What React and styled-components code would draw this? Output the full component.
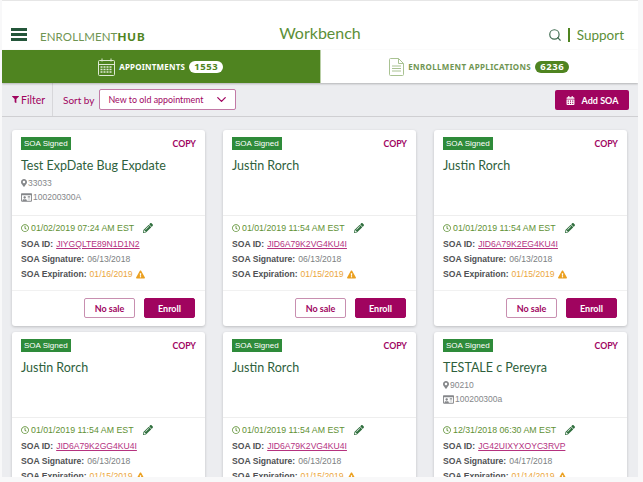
import React from 'react';
import styled, { createGlobalStyle } from 'styled-components';
import { FaFilter, FaMapMarkerAlt, FaRegIdCard, FaPencilAlt, FaExclamationTriangle, FaCalendarAlt, FaRegClock } from 'react-icons/fa';
import { FiSearch, FiChevronDown } from 'react-icons/fi';

const green = '#4f8420';
const softGreen = '#5c8f38';
const plum = '#a0045f';

const GlobalStyle = createGlobalStyle`
  html, body {
    margin: 0;
    background: #f8f8f9;
    overflow: hidden;
  }
`;

const Screen = styled.div`
  width: 636px;
  height: 477px;
  margin-left: 2px;
  overflow: hidden;
  background: #ecedf0;
  font-family: "Liberation Sans", Arial, sans-serif;
`;

const Header = styled.header`
  height: 50px;
  box-sizing: border-box;
  background: #fff;
  border-top: 1px solid #e6e6e6;
  display: grid;
  grid-template-columns: 1fr auto 1fr;
  align-items: end;
  padding: 0 9px 7px 9px;
`;

const Brand = styled.div`
  display: flex;
  align-items: flex-end;
  gap: 13px;
`;

const Burger = styled.div`
  width: 16px;
  height: 13px;
  margin-bottom: 2px;
  box-sizing: border-box;
  border-top: 3px solid #24563a;
  border-bottom: 3px solid #24563a;
  position: relative;
  &::after {
    content: "";
    position: absolute;
    left: 0;
    right: 0;
    top: 2px;
    height: 3px;
    background: #24563a;
  }
`;

const Logo = styled.div`
  font-family: "Lato", sans-serif;
  font-size: 11.5px;
  letter-spacing: 0.1px;
  color: #6f9552;
  b {
    font-weight: 900;
    color: ${green};
    letter-spacing: 1px;
  }
`;

const PageTitle = styled.h1`
  margin: 0 0 1px;
  font-family: "Lato", sans-serif;
  font-weight: 400;
  font-size: 16px;
  color: ${softGreen};
`;

const HeaderRight = styled.div`
  justify-self: end;
  display: flex;
  align-items: center;
  gap: 6px;
  margin-right: 5px;
  font-family: "Lato", sans-serif;
  font-size: 13.5px;
  color: ${softGreen};
  svg {
    color: #3f6b50;
  }
`;

const Bar = styled.span`
  width: 1.5px;
  height: 14px;
  margin-right: 1px;
  background: ${green};
`;

const Tabs = styled.nav`
  height: 33px;
  display: flex;
  box-shadow: 0 1px 2px rgba(0, 0, 0, 0.25);
  position: relative;
`;

const Tab = styled.div`
  flex: 1;
  display: flex;
  align-items: center;
  justify-content: center;
  gap: 4px;
  font-family: "Noto Sans", sans-serif;
  font-weight: 700;
  font-size: 8px;
  letter-spacing: ${(p) => (p.$active ? '0.2px' : '0.35px')};
  background: ${(p) => (p.$active ? green : '#fff')};
  color: ${(p) => (p.$active ? '#fff' : '#6f9552')};
  border-left: ${(p) => (p.$active ? 'none' : '1px solid #b9cfa6')};
`;

const Count = styled.span`
  border-radius: 7px;
  padding: 0 5px;
  height: 12px;
  line-height: 12px;
  font-size: 9.5px;
  letter-spacing: 0.6px;
  background: ${(p) => (p.$active ? '#fff' : green)};
  color: ${(p) => (p.$active ? green : '#fff')};
`;

const Toolbar = styled.div`
  height: 34px;
  display: flex;
  align-items: stretch;
  border-bottom: 1px solid #cfcfd2;
  box-sizing: border-box;
  padding-right: 9px;
  font-family: "Lato", sans-serif;
  color: ${plum};
`;

const FilterCell = styled.div`
  width: 51px;
  box-sizing: border-box;
  padding-left: 10px;
  display: flex;
  align-items: center;
  gap: 2px;
  font-size: 10.5px;
  border-right: 1px solid #d7d7da;
`;

const SortBy = styled.div`
  margin-left: 10px;
  display: flex;
  align-items: center;
  gap: 5px;
  font-size: 10px;
`;

const SortSelect = styled.div`
  width: 137px;
  height: 21px;
  box-sizing: border-box;
  display: flex;
  align-items: center;
  justify-content: space-between;
  padding: 0 6px 0 8px;
  background: #fff;
  border: 1px solid #c27aa6;
  border-radius: 2px;
  font-size: 8.9px;
`;

const AddButton = styled.button`
  margin: 7px 0 6px auto;
  width: 74px;
  border: none;
  border-radius: 2px;
  background: ${plum};
  color: #fff;
  font-family: "Lato", sans-serif;
  font-weight: 700;
  font-size: 9px;
  display: flex;
  align-items: center;
  justify-content: center;
  gap: 7px;
  padding: 0;
`;

const CardGrid = styled.main`
  display: grid;
  grid-template-columns: repeat(3, 193px);
  column-gap: 18px;
  row-gap: 6px;
  padding: 13px 0 0 10px;
`;

const Card = styled.article`
  height: 196px;
  display: flex;
  flex-direction: column;
  background: #fff;
  border-radius: 3px;
  box-shadow: 0 1px 3px rgba(0, 0, 0, 0.2);
`;

const CardTop = styled.div`
  height: 86px;
  box-sizing: border-box;
  padding: 7px 9px 0 9px;
  border-bottom: 1px solid #eeeeee;
`;

const TopRow = styled.div`
  display: flex;
  justify-content: space-between;
  align-items: flex-start;
`;

const Badge = styled.span`
  background: #2e8b3a;
  color: #fff;
  font-size: 8px;
  line-height: 13px;
  padding: 0 3px;
`;

const Copy = styled.span`
  font-family: "Lato", sans-serif;
  font-size: 8.7px;
  font-weight: 700;
  margin-top: 1px;
  color: ${plum};
`;

const Name = styled.h2`
  margin: 7px 0 1px;
  font-family: "Lato", sans-serif;
  font-weight: 400;
  font-size: 12.5px;
  line-height: 18px;
  color: #2e5f3c;
`;

const Meta = styled.div`
  display: flex;
  align-items: center;
  gap: 1px;
  height: 14px;
  font-size: 8.5px;
  color: #85878a;
`;

const Pin = styled(FaMapMarkerAlt)`
  margin: 0 -1px 0 -1px;
`;

const CardBody = styled.div`
  height: 75px;
  box-sizing: border-box;
  padding: 4px 10px 0 9px;
  border-bottom: 1px solid #f1f1f1;
  font-size: 8.6px;
`;

const When = styled.div`
  display: flex;
  align-items: center;
  gap: 2px;
  height: 15px;
  margin-bottom: 2px;
  font-size: 8.8px;
  color: #5f9135;
  svg:last-child {
    margin-left: 7px;
    color: #2f6e3d;
  }
`;

const Line = styled.div`
  height: 15px;
  line-height: 15px;
  display: flex;
  align-items: center;
  gap: 3px;
  font-weight: 700;
  color: #4f5154;
`;

const SoaLink = styled.a`
  font-weight: 400;
  color: #b5327f;
  text-decoration: underline;
`;

const Value = styled.span`
  font-weight: 400;
  color: ${(p) => (p.$warn ? '#eba63c' : '#7d7f82')};
`;

const CardFooter = styled.div`
  flex: 1;
  display: flex;
  justify-content: flex-end;
  align-items: flex-start;
  gap: 9px;
  padding: 7px 10px 0;
`;

const ActionButton = styled.button`
  width: 51px;
  height: 20px;
  padding: 0;
  border-radius: 2px;
  font-family: "Lato", sans-serif;
  font-size: 9px;
  font-weight: 700;
  border: 1px solid ${(p) => (p.$primary ? plum : '#c88fb0')};
  background: ${(p) => (p.$primary ? plum : '#fff')};
  color: ${(p) => (p.$primary ? '#fff' : plum)};
`;

const cards = [
  { name: 'Test ExpDate Bug Expdate', zip: '33033', mbi: '100200300A', when: '01/02/2019 07:24 AM EST', id: 'JIYGQLTE89N1D1N2', sig: '06/13/2018', exp: '01/16/2019' },
  { name: 'Justin Rorch', when: '01/01/2019 11:54 AM EST', id: 'JID6A79K2VG4KU4I', sig: '06/13/2018', exp: '01/15/2019' },
  { name: 'Justin Rorch', when: '01/01/2019 11:54 AM EST', id: 'JID6A79K2EG4KU4I', sig: '06/13/2018', exp: '01/15/2019' },
  { name: 'Justin Rorch', when: '01/01/2019 11:54 AM EST', id: 'JID6A79K2GG4KU4I', sig: '06/13/2018', exp: '01/15/2019' },
  { name: 'Justin Rorch', when: '01/01/2019 11:54 AM EST', id: 'JID6A79K2VG4KU4I', sig: '06/13/2018', exp: '01/15/2019' },
  { name: 'TESTALE c Pereyra', zip: '90210', mbi: '100200300a', when: '12/31/2018 06:30 AM EST', id: 'JG42UIXYXOYC3RVP', sig: '04/17/2018', exp: '01/14/2019' },
];

const CalendarIcon = () => (
  <svg width="17" height="18" viewBox="0 0 17 18" fill="none" stroke="#dfe9d5" strokeWidth="1">
    <rect x="0.5" y="2.5" width="16" height="15" rx="1" />
    <path d="M0.5 6.5h16M4 0.5v3M13 0.5v3" />
    <path d="M2.5 9h12M2.5 11.5h12M2.5 14h12" strokeWidth="1.4" strokeDasharray="2 1" />
  </svg>
);

const DocumentIcon = () => (
  <svg width="15" height="18" viewBox="0 0 15 18" fill="none" stroke="#a9c292" strokeWidth="1">
    <path d="M1.5 0.5h8l5 5v11a1 1 0 0 1-1 1h-12a1 1 0 0 1-1-1v-15a1 1 0 0 1 1-1z" />
    <path d="M9.5 0.5v5h5M3 8h9M3 10.5h9M3 13h9" />
  </svg>
);

function SoaCard({ card }) {
  return (
    <Card>
      <CardTop>
        <TopRow>
          <Badge>SOA Signed</Badge>
          <Copy>COPY</Copy>
        </TopRow>
        <Name>{card.name}</Name>
        {card.zip && (
          <Meta>
            <Pin size={8} /> {card.zip}
          </Meta>
        )}
        {card.mbi && (
          <Meta>
            <FaRegIdCard size={11} /> {card.mbi}
          </Meta>
        )}
      </CardTop>
      <CardBody>
        <When>
          <FaRegClock size={8} />
          {card.when}
          <FaPencilAlt size={10} />
        </When>
        <Line>
          SOA ID: <SoaLink>{card.id}</SoaLink>
        </Line>
        <Line>
          SOA Signature: <Value>{card.sig}</Value>
        </Line>
        <Line>
          SOA Expiration: <Value $warn>{card.exp}</Value>
          <FaExclamationTriangle size={9} color="#eba020" />
        </Line>
      </CardBody>
      <CardFooter>
        <ActionButton>No sale</ActionButton>
        <ActionButton $primary>Enroll</ActionButton>
      </CardFooter>
    </Card>
  );
}

export default function App() {
  return (
    <Screen>
      <GlobalStyle />
      <Header>
        <Brand>
          <Burger />
          <Logo>
            ENROLLMENT<b>HUB</b>
          </Logo>
        </Brand>
        <PageTitle>Workbench</PageTitle>
        <HeaderRight>
          <FiSearch size={14} />
          <Bar />
          Support
        </HeaderRight>
      </Header>
      <Tabs>
        <Tab $active>
          <CalendarIcon />
          APPOINTMENTS <Count $active>1553</Count>
        </Tab>
        <Tab>
          <DocumentIcon />
          ENROLLMENT APPLICATIONS <Count>6236</Count>
        </Tab>
      </Tabs>
      <Toolbar>
        <FilterCell>
          <FaFilter size={7} /> Filter
        </FilterCell>
        <SortBy>
          Sort by
          <SortSelect>
            New to old appointment
            <FiChevronDown size={15} />
          </SortSelect>
        </SortBy>
        <AddButton>
          <FaCalendarAlt size={9} /> Add SOA
        </AddButton>
      </Toolbar>
      <CardGrid>
        {cards.map((card, i) => (
          <SoaCard key={i} card={card} />
        ))}
      </CardGrid>
    </Screen>
  );
}
